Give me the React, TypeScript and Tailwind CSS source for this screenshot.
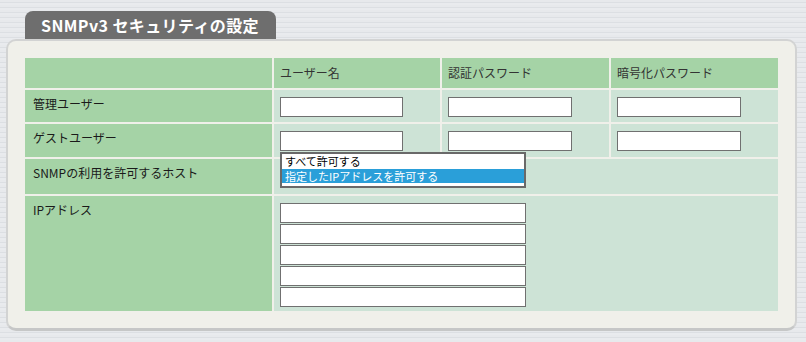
import React from "react";

const font = { fontFamily: '"Noto Sans CJK JP", "Noto Sans", sans-serif' };

function Input({ w }: { w: string }) {
  return <div className={`h-[20px] ${w} border border-[#707070] bg-white`} />;
}

export default function App() {
  return (
    <div
      className="w-[806px] h-[342px] overflow-hidden pt-[11px] bg-[repeating-linear-gradient(to_bottom,#e7e9ec_0px,#e7e9ec_2px,#dcdfe3_2px,#dcdfe3_3px,#e9ebee_3px,#e9ebee_5px)]"
      style={font}
    >
      <div className="ml-[25px] w-[251px] h-[28px] rounded-t-[8px] bg-[#6e6e6e] pl-[16px] text-white font-bold text-[16px] leading-[28px] tracking-[0.4px]">
        SNMPv3 セキュリティの設定
      </div>
      <div className="ml-[6px] w-[791px] h-[292px] rounded-[10px] border-2 border-[#d2d3d3] border-b-[3px] border-b-[#c6c7c7] bg-[#f0f0ea] pl-[17px] pt-[17px]">
        <div className="grid grid-cols-[247px_166px_167px_167px] grid-rows-[30px_32px_33px_35px_115px] gap-[2px] text-[12px] text-[#1a1a1a] leading-[16px]">
          {/* header */}
          <div className="bg-[#a5d3a6]" />
          <div className="bg-[#a5d3a6] pl-[6px] flex items-center text-[#333]">ユーザー名</div>
          <div className="bg-[#a5d3a6] pl-[6px] flex items-center text-[#333]">認証パスワード</div>
          <div className="bg-[#a5d3a6] pl-[6px] flex items-center text-[#333]">暗号化パスワード</div>

          {/* row 1 */}
          <div className="bg-[#a5d3a6] pl-[8px] pt-[6px]">管理ユーザー</div>
          <div className="bg-[#cde3d6] pl-[6px] pt-[7px]"><Input w="w-[123px]" /></div>
          <div className="bg-[#cde3d6] pl-[6px] pt-[7px]"><Input w="w-[124px]" /></div>
          <div className="bg-[#cde3d6] pl-[6px] pt-[7px]"><Input w="w-[124px]" /></div>

          {/* row 2 */}
          <div className="bg-[#a5d3a6] pl-[8px] pt-[6px]">ゲストユーザー</div>
          <div className="bg-[#cde3d6] pl-[6px] pt-[7px]"><Input w="w-[123px]" /></div>
          <div className="bg-[#cde3d6] pl-[6px] pt-[7px]"><Input w="w-[124px]" /></div>
          <div className="bg-[#cde3d6] pl-[6px] pt-[7px]"><Input w="w-[124px]" /></div>

          {/* row 3 */}
          <div className="bg-[#a5d3a6] pl-[8px] pt-[6px]">SNMPの利用を許可するホスト</div>
          <div className="col-span-3 bg-[#cde3d6] pl-[6px]">
            <div className="relative -mt-[7px] w-[246px] h-[36px] border-2 border-[#696969] bg-white text-[11px]">
              <div className="h-[15px] pl-[3px] leading-[15px] text-black">すべて許可する</div>
              <div className="h-[14px] pl-[3px] leading-[14px] bg-[#2a9fd9] text-white">指定したIPアドレスを許可する</div>
            </div>
          </div>

          {/* row 4 */}
          <div className="bg-[#a5d3a6] pl-[8px] pt-[6px]">IPアドレス</div>
          <div className="col-span-3 bg-[#cde3d6] pl-[6px] pt-[7px] flex flex-col gap-[1px]">
            <Input w="w-[246px]" />
            <Input w="w-[246px]" />
            <Input w="w-[246px]" />
            <Input w="w-[246px]" />
            <Input w="w-[246px]" />
          </div>
        </div>
      </div>
    </div>
  );
}
